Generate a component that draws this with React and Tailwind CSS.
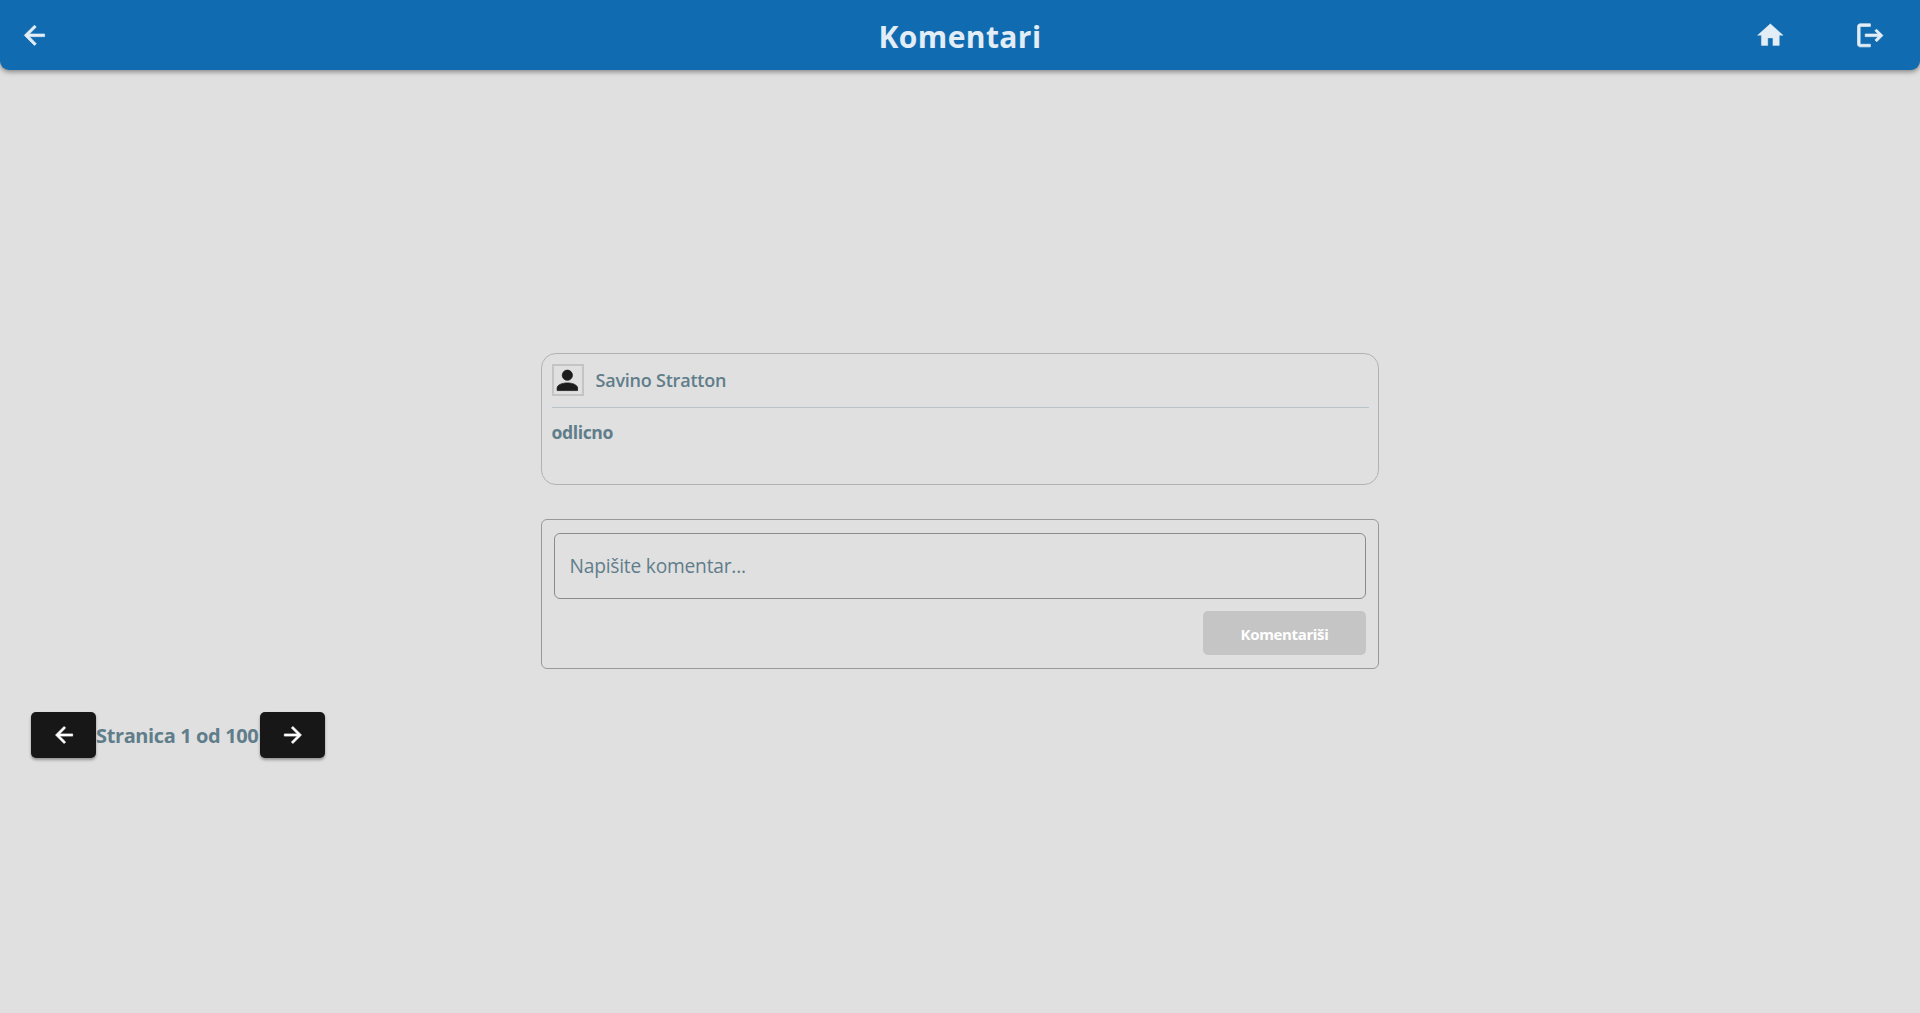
const PATHS = {
  back: "M20,11V13H8L13.5,18.5L12.08,19.92L4.16,12L12.08,4.08L13.5,5.5L8,11H20Z",
  next: "M4,11V13H16L10.5,18.5L11.92,19.92L19.84,12L11.92,4.08L10.5,5.5L16,11H4Z",
  home: "M10,20V14H14V20H19V12H22L12,3L2,12H5V20H10Z",
  logout:
    "M17 7L15.59 8.41L18.17 11H8V13H18.17L15.59 15.58L17 17L22 12M4 5H12V3H4C2.9 3 2 3.9 2 5V19C2 20.1 2.9 21 4 21H12V19H4V5Z",
  account:
    "M12,4A4,4 0 0,1 16,8A4,4 0 0,1 12,12A4,4 0 0,1 8,8A4,4 0 0,1 12,4M12,14C16.42,14 20,15.79 20,18V20H4V18C4,15.79 7.58,14 12,14Z",
};

function Icon({ name, className, weight = 0 }) {
  return (
    <svg
      viewBox="0 0 24 24"
      fill="currentColor"
      stroke="currentColor"
      strokeWidth={weight}
      strokeLinejoin="round"
      className={className}
    >
      <path d={PATHS[name]} />
    </svg>
  );
}

function Header() {
  return (
    <header className="grid h-[70px] shrink-0 grid-cols-3 items-center rounded-b-[9px] bg-[#106bb0] px-5 text-[#e2edf6] shadow-[0_2px_5px_rgba(0,0,0,0.4)]">
      <button className="-ml-px w-fit">
        <Icon name="back" weight={0.6} className="size-[30.7px]" />
      </button>
      <h1 className="justify-self-center pt-[3px] text-[30px] leading-none font-bold tracking-[0.4px] whitespace-nowrap">
        Komentari
      </h1>
      <div className="mr-[14.5px] flex gap-[69px] justify-self-end">
        <button>
          <Icon name="home" weight={0.3} className="size-[30.7px]" />
        </button>
        <button>
          <Icon name="logout" weight={0.6} className="size-[30.7px]" />
        </button>
      </div>
    </header>
  );
}

function Comment({ author, text }) {
  return (
    <article className="h-[132px] rounded-[15px] border border-[#b2b2b2] px-[9.5px] pt-[9.5px]">
      <div className="flex h-[44.5px] items-start gap-3 border-b border-[#b9c4ca]">
        <div className="flex size-8 items-center justify-center border-2 border-[#c4c4c4] text-[#1c1c1c]">
          <Icon name="account" weight={0.6} className="mt-px size-[30.7px] shrink-0" />
        </div>
        <span className="text-[18px] leading-8 font-semibold tracking-[-0.22px] whitespace-nowrap">{author}</span>
      </div>
      <p className="pt-[11px] text-[17.6px] leading-[26px] font-bold tracking-[-0.4px]">{text}</p>
    </article>
  );
}

function CommentForm() {
  return (
    <section className="mt-[34px] flex h-[150px] flex-col items-end gap-3 rounded-[6px] border border-[#999] px-3 pt-[13px]">
      <div className="flex h-[66px] w-full items-center rounded-[6px] border-[1.5px] border-[#8b8b8b] px-[14.5px] pt-px text-[19.2px] tracking-[-0.22px]">
        Napišite komentar...
      </div>
      <button className="h-11 w-[163px] rounded-[5px] bg-[#c5c5c5] pt-[3px] text-[15px] font-bold tracking-[-0.35px] text-white">
        Komentariši
      </button>
    </section>
  );
}

function PageButton({ icon }) {
  return (
    <button className="flex h-[46px] w-[65px] items-center justify-center rounded-[5px] bg-[#171717] text-white shadow-[0_2px_3px_rgba(0,0,0,0.35)]">
      <Icon name={icon} weight={0.6} className="size-[26px]" />
    </button>
  );
}

export default function App() {
  return (
    <div className="flex h-screen flex-col overflow-hidden bg-[#e0e0e0] font-['Open_Sans','Noto_Sans',sans-serif] text-[#607d8b]">
      <Header />
      <main className="mx-auto mt-[283px] w-[838px]">
        <Comment author="Savino Stratton" text="odlicno" />
        <CommentForm />
      </main>
      <nav className="mt-[43px] ml-[31px] flex items-center">
        <PageButton icon="back" />
        <span className="w-[164px] pt-0.5 text-[20px] font-bold tracking-[-0.38px] whitespace-nowrap">
          Stranica 1 od 100
        </span>
        <PageButton icon="next" />
      </nav>
    </div>
  );
}
